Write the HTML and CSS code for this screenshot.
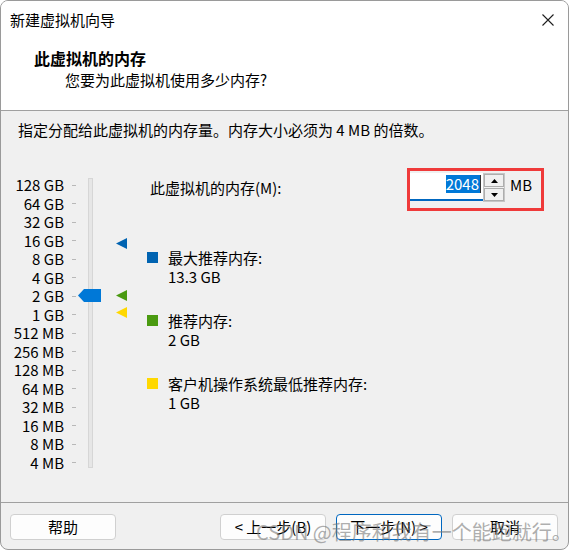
FILE: index.html
```html
<!DOCTYPE html>
<html lang="zh-CN">
<head>
    <meta charset="UTF-8">
    <title>新建虚拟机向导</title>
    <link rel="stylesheet" href="styles.css">
</head>
<body>
    <div class="window">
        <div class="header">
            <div class="titlebar">
                <span class="title">新建虚拟机向导</span>
                <svg class="close" width="12" height="12" viewBox="0 0 12 12">
                    <path d="M0.5 0.5L11.5 11.5M11.5 0.5L0.5 11.5" stroke="#1f1f1f" stroke-width="1.1" fill="none"/>
                </svg>
            </div>
            <div class="heading">此虚拟机的内存</div>
            <div class="subheading">您要为此虚拟机使用多少内存?</div>
        </div>

        <div class="content">
            <p class="intro">指定分配给此虚拟机的内存量。内存大小必须为 4 MB 的倍数。</p>

            <div class="main">
                <div class="scale">
                    <ul class="labels">
                        <li>128 GB</li>
                        <li>64 GB</li>
                        <li>32 GB</li>
                        <li>16 GB</li>
                        <li>8 GB</li>
                        <li>4 GB</li>
                        <li>2 GB</li>
                        <li>1 GB</li>
                        <li>512 MB</li>
                        <li>256 MB</li>
                        <li>128 MB</li>
                        <li>64 MB</li>
                        <li>32 MB</li>
                        <li>16 MB</li>
                        <li>8 MB</li>
                        <li>4 MB</li>
                    </ul>
                    <ul class="ticks">
                        <li></li><li></li><li></li><li></li>
                        <li></li><li></li><li></li><li></li>
                        <li></li><li></li><li></li><li></li>
                        <li></li><li></li><li></li><li></li>
                    </ul>
                    <div class="rail">
                        <div class="track"></div>
                        <!-- positions follow the log scale of the slider -->
                        <div class="thumb" style="top: 113px;"></div>
                        <div class="marker marker-max" style="top: 62px;"></div>
                        <div class="marker marker-rec" style="top: 114px;"></div>
                        <div class="marker marker-min" style="top: 131px;"></div>
                    </div>
                </div>

                <div class="details">
                    <div class="memory-row">
                        <span class="memory-label">此虚拟机的内存(M):</span>
                        <div class="highlight">
                            <div class="field">
                                <span class="selection">2048</span><span class="caret"></span>
                            </div>
                            <div class="spin">
                                <div class="spin-btn">
                                    <svg width="7" height="4" viewBox="0 0 7 4"><path d="M3.5 0L7 4H0Z" fill="#000"/></svg>
                                </div>
                                <div class="spin-btn">
                                    <svg width="7" height="4" viewBox="0 0 7 4"><path d="M0 0H7L3.5 4Z" fill="#000"/></svg>
                                </div>
                            </div>
                            <span class="unit">MB</span>
                        </div>
                    </div>

                    <ul class="legend">
                        <li>
                            <span class="swatch swatch-max"></span>
                            <div>最大推荐内存:<br>13.3 GB</div>
                        </li>
                        <li>
                            <span class="swatch swatch-rec"></span>
                            <div>推荐内存:<br>2 GB</div>
                        </li>
                        <li>
                            <span class="swatch swatch-min"></span>
                            <div>客户机操作系统最低推荐内存:<br>1 GB</div>
                        </li>
                    </ul>
                </div>
            </div>
        </div>

        <div class="footer">
            <button class="button">帮助</button>
            <div class="nav">
                <button class="button">&lt; 上一步(B)</button>
                <button class="button primary">下一步(N) &gt;</button>
                <button class="button">取消</button>
            </div>
        </div>

        <div class="watermark">CSDN @程序和我有一个能跑就行。</div>
    </div>
</body>
</html>
```

FILE: styles.css
```css
body {
    margin: 0;
    background: #ffffff;
    font-family: "Noto Sans CJK SC", sans-serif;
    font-size: 15px;
    color: #000000;
}

.window {
    position: relative;
    width: 569px;
    height: 550px;
    box-sizing: border-box;
    border: 1px solid #9a9a9a;
    border-radius: 8px;
    background: #f0f0f0;
    overflow: hidden;
    display: flex;
    flex-direction: column;
}

.header {
    height: 110px;
    box-sizing: border-box;
    background: #ffffff;
    border-bottom: 1px solid #a0a0a0;
}

.titlebar {
    height: 38px;
    display: flex;
    align-items: center;
    justify-content: space-between;
    padding: 0 14px 0 9px;
    line-height: 20px;
}

.heading {
    margin: 8.5px 0 0 33px;
    font-weight: bold;
    font-size: 16px;
    line-height: 20px;
}

.subheading {
    margin: 2.5px 0 0 64px;
    line-height: 20px;
}

.content {
    flex: 1;
    padding: 9px 24px 0 17px;
}

.intro {
    margin: 0;
    line-height: 20px;
}

.main {
    display: flex;
    margin-top: 28px;
}

.scale {
    display: flex;
    margin: 8px 0 0 -6px;
}

.labels,
.ticks,
.legend {
    list-style: none;
    margin: 0;
    padding: 0;
}

.labels {
    width: 52px;
    text-align: right;
    white-space: nowrap;
}

.labels li {
    height: 18.5px;
    line-height: 18.5px;
}

.ticks {
    width: 4px;
    margin-left: 8px;
}

.ticks li {
    height: 18.5px;
    display: flex;
    align-items: center;
}

.ticks li::before {
    content: "";
    width: 4px;
    height: 1px;
    background: #b8b8b8;
}

.rail {
    position: relative;
    width: 50px;
    margin-left: 2px;
}

.track {
    width: 5px;
    height: 290px;
    margin: 2px 0 0 10px;
    box-sizing: border-box;
    border: 1px solid #d6d6d6;
    background: #e6e6e6;
}

.thumb {
    position: absolute;
    left: 0;
    width: 23px;
    height: 13px;
    background: #0078d7;
    clip-path: polygon(0 50%, 6px 0, 100% 0, 100% 100%, 6px 100%);
}

.marker {
    position: absolute;
    left: 38px;
    width: 11px;
    height: 11px;
    clip-path: polygon(0 50%, 100% 0, 100% 100%);
}

.marker-max { background: #0063b1; }
.marker-rec { background: #4a9a10; }
.marker-min { background: #ffd800; }

.details {
    flex: 1;
    margin-left: 19px;
}

.memory-row {
    display: flex;
    align-items: flex-start;
    justify-content: space-between;
}

.memory-label {
    margin: 10px 0 0 3px;
    line-height: 20px;
}

.highlight {
    width: 137px;
    height: 43px;
    box-sizing: border-box;
    border: 3px solid #ef3a3a;
    padding-top: 2px;
    display: flex;
    align-items: flex-start;
}

.field {
    width: 73px;
    height: 28px;
    box-sizing: border-box;
    background: #ffffff;
    border-bottom: 2px solid #0067c0;
    padding: 2px 2px 0 0;
    display: flex;
    justify-content: flex-end;
    align-items: flex-start;
}

.selection {
    height: 18px;
    line-height: 18px;
    padding: 0 1px 0 0;
    background: #0078d7;
    color: #ffffff;
}

.caret {
    width: 1px;
    height: 18px;
    background: #333333;
}

.spin {
    width: 22px;
    height: 29px;
    box-sizing: border-box;
    border: 1px solid #c6c6c6;
    display: flex;
    flex-direction: column;
    gap: 1px;
}

.spin-btn {
    flex: 1;
    border: 1px solid #adadad;
    background: #f0f0f0;
    display: flex;
    align-items: center;
    justify-content: center;
}

.unit {
    margin: 2px 0 0 5px;
    line-height: 20px;
}

.legend {
    margin-top: 37px;
    display: flex;
    flex-direction: column;
    gap: 25px;
}

.legend li {
    display: flex;
    line-height: 19px;
}

.swatch {
    flex: none;
    width: 11px;
    height: 11px;
    margin: 4px 10px 0 0;
}

.swatch-max { background: #0063b1; }
.swatch-rec { background: #4a9a10; }
.swatch-min { background: #ffd800; }

.footer {
    height: 47px;
    box-sizing: border-box;
    border-top: 1px solid #a0a0a0;
    padding: 11px 10px 0 9px;
    display: flex;
    justify-content: space-between;
    align-items: flex-start;
}

.nav {
    display: flex;
    gap: 10px;
}

.button {
    width: 106px;
    height: 26px;
    padding: 0;
    box-sizing: border-box;
    border: 1px solid #d0d0d0;
    border-radius: 4px;
    background: #fdfdfd;
    color: #000000;
    font-family: "Noto Sans CJK SC", sans-serif;
    font-size: 15px;
    line-height: 22px;
}

.primary {
    border-color: #0067c0;
}

.watermark {
    position: absolute;
    left: 255px;
    top: 519px;
    font-size: 20px;
    line-height: 24px;
    white-space: nowrap;
    color: rgba(120, 120, 120, 0.6);
    pointer-events: none;
}
```
